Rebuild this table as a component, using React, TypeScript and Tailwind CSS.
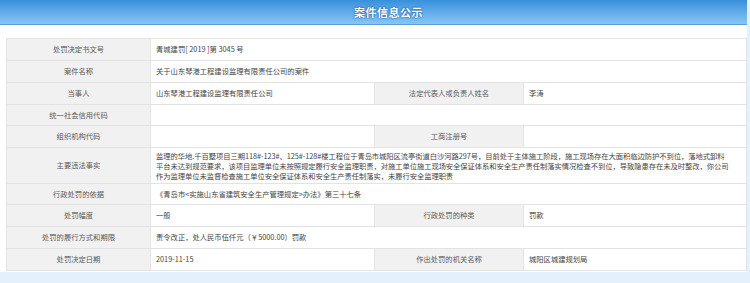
import React from 'react'

type Row = {
  label: string
  value?: React.ReactNode
  label2?: string
  value2?: string
  h: string
}

const rows: Row[] = [
  { label: '处罚决定书文号', value: '青城建罚[ 2019 ]第 3045 号', h: 'h-[22px]' },
  { label: '案件名称', value: '关于山东琴港工程建设监理有限责任公司的案件', h: 'h-[22px]' },
  { label: '当事人', value: '山东琴港工程建设监理有限责任公司', label2: '法定代表人或负责人姓名', value2: '李涛', h: 'h-[22px]' },
  { label: '统一社会信用代码', h: 'h-[21px]' },
  { label: '组织机构代码', label2: '工商注册号', value2: '', h: 'h-[22px]' },
  {
    label: '主要违法事实',
    value: (
      <div className="leading-[10px] whitespace-nowrap tracking-[-0.05px]">
        <div>监理的华地.千百墅项目三期118#-123#、125#-128#楼工程位于青岛市城阳区流亭街道白沙河路297号，目前处于主体施工阶段，施工现场存在大面积临边防护不到位，落地式卸料</div>
        <div>平台未达到规范要求，该项目监理单位未按照规定履行安全监理职责，对施工单位施工现场安全保证体系和安全生产责任制落实情况检查不到位，导致隐患存在未及时整改，你公司</div>
        <div>作为监理单位未监督检查施工单位安全保证体系和安全生产责任制落实，未履行安全监理职责</div>
      </div>
    ),
    h: 'h-[36px]',
  },
  { label: '行政处罚的依据', value: '《青岛市<实施山东省建筑安全生产管理规定>办法》第三十七条', h: 'h-[21px]' },
  { label: '处罚幅度', value: '一般', label2: '行政处罚的种类', value2: '罚款', h: 'h-[22px]' },
  { label: '处罚的履行方式和期限', value: '责令改正，处人民币伍仟元（￥5000.00）罚款', h: 'h-[22px]' },
  { label: '处罚决定日期', value: '2019-11-15', label2: '作出处罚的机关名称', value2: '城阳区城建规划局', h: 'h-[22px]' },
]

export default function App() {
  return (
    <div className="w-[750px] h-[283px] bg-[#e4f0fb] font-['Noto_Sans_CJK_SC','Noto_Sans',sans-serif] text-[7.3px] text-[#5a5a5a]">
      <div className="w-[747px] bg-white pb-[1px]">
        <div className="h-[25px] bg-gradient-to-b from-[#3790dc] to-[#86c6f5] border-b border-[#5b9ed9] flex items-center justify-center pl-[30px]">
          <span className="text-white font-bold text-[11px] tracking-[0.5px] [text-shadow:0_0_2px_#1b5c9c,0_0_1px_#1b5c9c]">
            案件信息公示
          </span>
        </div>
        <div className="h-[13px]" />
        <div className="ml-[6px] border-t border-l border-[#e3e3e3]">
          {rows.map((r) => (
            <div key={r.label} className={`flex ${r.h} border-b border-[#e3e3e3]`}>
              <div className="w-[144px] shrink-0 bg-[#f1f1f1] border-r border-[#e3e3e3] flex items-center justify-center">
                {r.label}
              </div>
              {r.label2 !== undefined ? (
                <>
                  <div className="w-[224px] shrink-0 border-r border-[#e3e3e3] flex items-center pl-[5px] text-[#444]">
                    {r.value}
                  </div>
                  <div className="w-[149px] shrink-0 bg-[#f1f1f1] border-r border-[#e3e3e3] flex items-center justify-center">
                    {r.label2}
                  </div>
                  <div className="flex-1 border-r border-[#e3e3e3] flex items-center pl-[5px] text-[#444]">
                    {r.value2}
                  </div>
                </>
              ) : (
                <div className="flex-1 min-w-0 border-r border-[#e3e3e3] flex items-center pl-[5px] text-[#444] overflow-hidden">
                  {r.value}
                </div>
              )}
            </div>
          ))}
        </div>
      </div>
    </div>
  )
}
